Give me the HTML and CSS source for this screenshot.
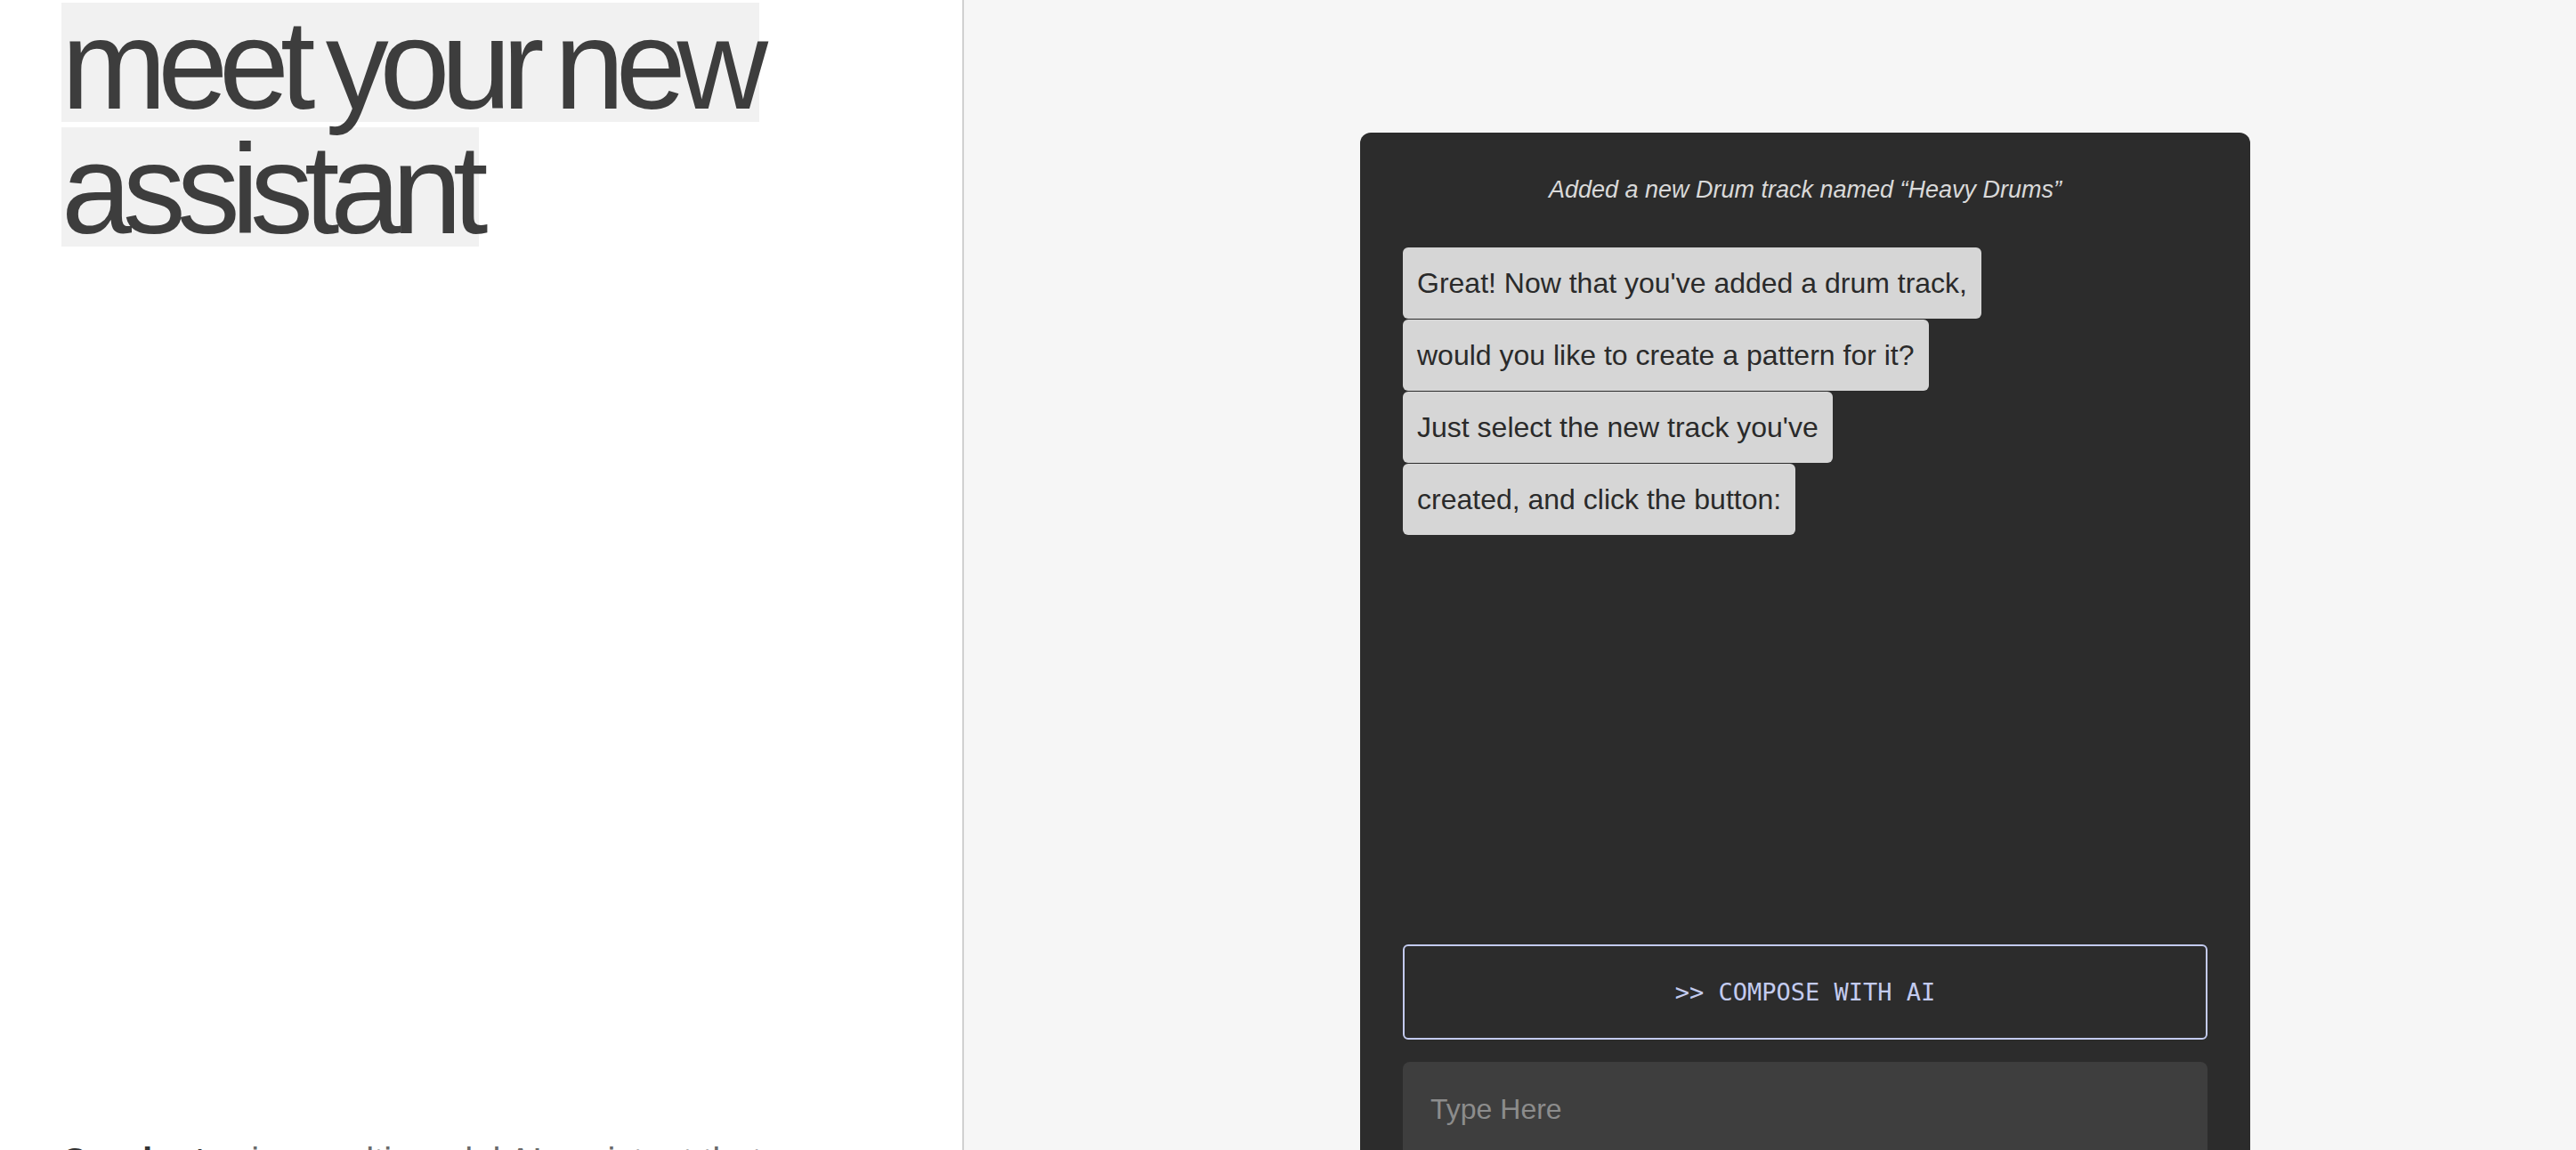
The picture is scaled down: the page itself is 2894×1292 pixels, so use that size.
FILE: index.html
```html
<!DOCTYPE html>
<html lang="en">
<head>
<meta charset="utf-8">
<title>Conductor — meet your new assistant</title>
<link rel="stylesheet" href="styles.css">
</head>
<body>
<div class="page">
  <section class="intro">
    <h1 class="headline"><span class="hl-line">meet your new</span><span class="hl-line">assistant</span></h1>
    <p class="about"><strong>Conductor</strong> is a multi-modal AI assistant that helps you compose, arrange and produce new tracks.</p>
  </section>
  <section class="stage">
    <div class="chat">
      <p class="event">Added a new Drum track named “Heavy Drums”</p>
      <div class="messages">
        <div class="bubble">Great! Now that you've added a drum track,</div>
        <div class="bubble">would you like to create a pattern for it?</div>
        <div class="bubble">Just select the new track you've</div>
        <div class="bubble">created, and click the button:</div>
      </div>
      <button class="compose" type="button">&gt;&gt; COMPOSE WITH AI</button>
      <div class="input">Type Here</div>
    </div>
  </section>
</div>
</body>
</html>
```

FILE: styles.css
```css
html, body {
  margin: 0;
  padding: 0;
}

body {
  font-family: "Liberation Sans", Arial, sans-serif;
  background: #ffffff;
  overflow: hidden;
}

.page {
  display: flex;
  height: 100vh;
}

.intro {
  width: 1083px;
  flex: none;
  box-sizing: border-box;
  border-right: 2px solid #d0d0d0;
  background: #ffffff;
  padding: 3px 0 0 69px;
}

.headline {
  margin: 0;
  font-weight: 400;
  font-size: 142px;
  letter-spacing: -10.1px;
  word-spacing: -8px;
  color: #3d3d3d;
}

.hl-line {
  display: block;
  width: fit-content;
  height: 134px;
  box-sizing: border-box;
  padding-top: 6px;
  line-height: 128px;
  background: #f1f1f1;
  white-space: nowrap;
}

.hl-line + .hl-line {
  margin-top: 6px;
}

.about {
  margin: 1001px 0 0;
  font-size: 40px;
  line-height: 52px;
  color: #6a6a6a;
  width: 800px;
}

.about strong {
  color: #333333;
  font-weight: 700;
}

.stage {
  flex: 1;
  background: #f6f6f6;
  padding: 149px 0 0 445px;
}

.chat {
  width: 1000px;
  height: 1232px;
  box-sizing: border-box;
  background: #2c2c2c;
  border-radius: 12px;
  padding: 49px 48px 48px;
  display: flex;
  flex-direction: column;
}

.event {
  margin: 0 0 49px;
  text-align: center;
  font-style: italic;
  font-size: 27px;
  line-height: 31px;
  color: #d9d9d9;
}

.messages {
  flex: 1;
  display: flex;
  flex-direction: column;
  align-items: flex-start;
  gap: 1px;
}

.bubble {
  background: #d6d6d6;
  color: #2a2a2a;
  font-size: 32px;
  line-height: 40px;
  padding: 20px 16px;
  border-radius: 6px;
  white-space: nowrap;
}

.compose {
  flex: none;
  height: 107px;
  margin: 0 0 25px;
  background: transparent;
  border: 2px solid #c3cbef;
  border-radius: 6px;
  color: #c3cbef;
  font-family: "DejaVu Sans Mono", "Liberation Mono", monospace;
  font-size: 27px;
  cursor: pointer;
}

.input {
  flex: none;
  height: 140px;
  box-sizing: border-box;
  background: #3e3e3e;
  border-radius: 8px;
  padding: 35px 31px;
  font-size: 32px;
  line-height: 37px;
  color: #8c8c8c;
}
```
